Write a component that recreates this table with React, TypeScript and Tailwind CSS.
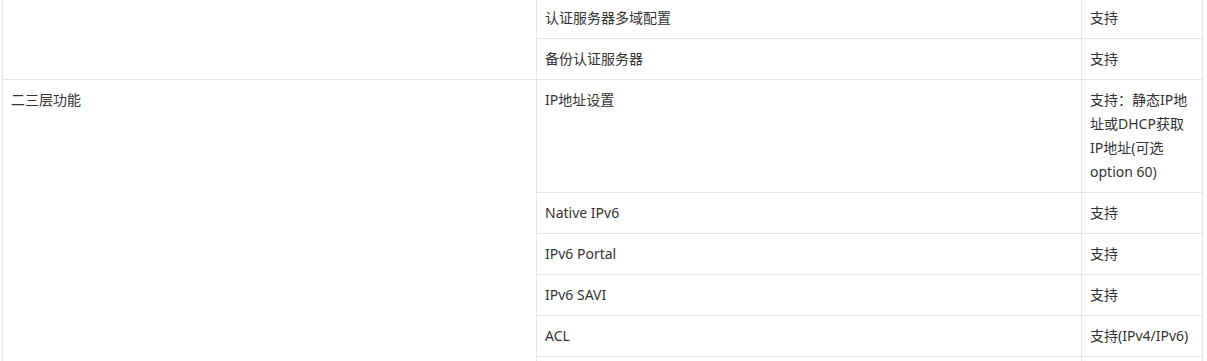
import React from 'react';

type Row = { name: string; value: string };

const authRows: Row[] = [
  { name: '认证服务器多域配置', value: '支持' },
  { name: '备份认证服务器', value: '支持' },
];

const l3Rows: Row[] = [
  { name: 'IP地址设置', value: '支持：静态IP地址或DHCP获取IP地址(可选 option 60)' },
  { name: 'Native IPv6', value: '支持' },
  { name: 'IPv6 Portal', value: '支持' },
  { name: 'IPv6 SAVI', value: '支持' },
  { name: 'ACL', value: '支持(IPv4/IPv6)' },
  { name: '', value: '' },
];

const cell = 'border border-[#e5e5e5] px-2 py-2 align-top leading-6 h-[41px]';

export default function App() {
  return (
    <div
      className="bg-white w-[1207px] h-[361px] overflow-hidden text-[14px] text-[#333333]"
      style={{ fontFamily: '"Noto Sans", "Noto Sans CJK SC", sans-serif' }}
    >
      <table className="ml-[2px] -mt-[3px] w-[1200px] table-fixed border-collapse">
        <colgroup>
          <col className="w-[534px]" />
          <col className="w-[545px]" />
          <col className="w-[121px]" />
        </colgroup>
        <tbody>
          {authRows.map((r, i) => (
            <tr key={r.name}>
              {i === 0 && <td className={cell} rowSpan={authRows.length}></td>}
              <td className={cell}>{r.name}</td>
              <td className={cell}>{r.value}</td>
            </tr>
          ))}
          {l3Rows.map((r, i) => (
            <tr key={i}>
              {i === 0 && (
                <td className={cell} rowSpan={l3Rows.length}>
                  二三层功能
                </td>
              )}
              <td className={cell}>{r.name}</td>
              <td className={cell}>{r.value}</td>
            </tr>
          ))}
        </tbody>
      </table>
    </div>
  );
}
